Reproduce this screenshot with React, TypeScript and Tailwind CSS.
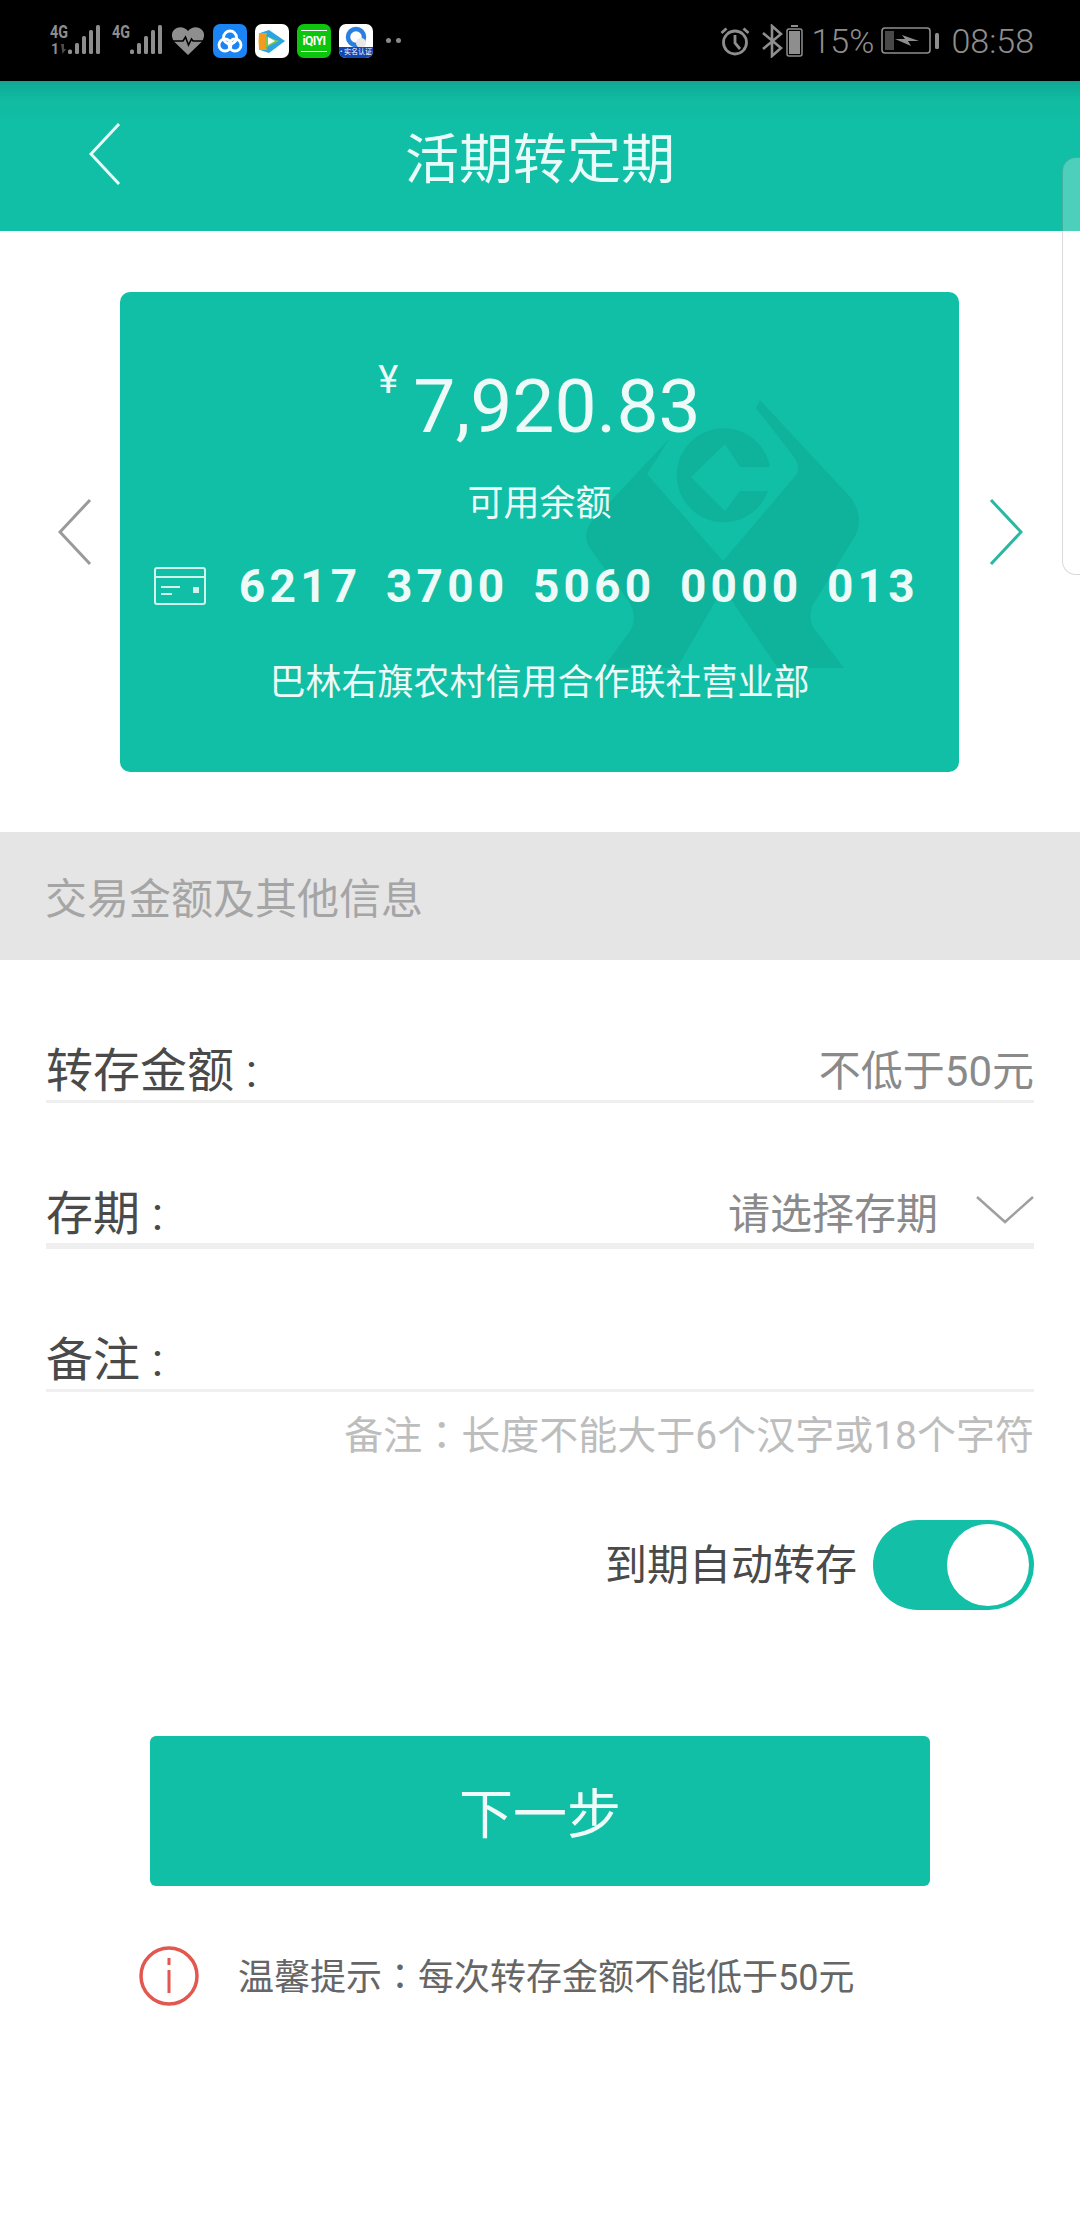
const gray = '#8e8e8e';

function Signal({ second }: { second?: boolean }) {
  return (
    <svg width="56" height="46" viewBox="0 -6 56 46" className="shrink-0">
      <text x="0" y="14" fontSize="18" fontWeight="700" fill={gray} fontFamily="Roboto, sans-serif" textLength="18" lengthAdjust="spacingAndGlyphs">4G</text>
      {second ? null : (
        <>
          <text x="1" y="30" fontSize="14" fontWeight="700" fill={gray} fontFamily="Roboto, sans-serif">1</text>
          <path d="M11 20h3v5h2l-3.5 5z" fill="#4b4b4b" />
        </>
      )}
      <rect x="18" y="25.5" width="4" height="4.5" rx="1.5" fill={gray} />
      <rect x="25" y="19" width="4" height="11" rx="1.5" fill={gray} />
      <rect x="32" y="12" width="4" height="18" rx="1.5" fill={gray} />
      <rect x="39" y="6" width="4" height="24" rx="1.5" fill={gray} />
      <rect x="46" y="1" width="4" height="29" rx="1.5" fill={gray} />
    </svg>
  );
}

function HeartRate() {
  return (
    <svg width="32" height="28" viewBox="0 0 32 28" className="shrink-0">
      <path d="M16 28 3 15.5C-1 11-1 5.5 2.500 2.500 6.500-.8 12-.5 16 4c4-4.500 9.500-4.800 13.500-1.500 3.500 3 3.500 8.500-.5 13z" fill={gray} />
      <path d="M1 14h10l2.500-4 3 8 3-6 1.500 2h10" fill="none" stroke="#000" strokeWidth="1.600" />
    </svg>
  );
}

function AppIcons() {
  return (
    <div className="flex gap-[8px] ml-[9px]">
      <svg width="34" height="34" viewBox="0 0 34 34">
        <rect width="34" height="34" rx="7" fill="#1a84f5" />
        <g fill="none" stroke="#fff" strokeWidth="2.800">
          <circle cx="17" cy="13.500" r="6.500" />
          <circle cx="12" cy="21" r="6" />
          <circle cx="22" cy="21" r="6" />
        </g>
      </svg>
      <svg width="34" height="34" viewBox="0 0 34 34">
        <rect width="34" height="34" rx="7" fill="#fff" />
        <path d="M5 9 14 6 30 17 14 29 5 26z" fill="#2aa5e0" />
        <path d="M4 9h8l-2 8 2 9-8 0q-1-9 0-17z" fill="#f39a1f" />
        <path d="M10 12 24 17 10 24z" fill="#7cc84a" />
        <path d="M13 13 20 17 13 21z" fill="#fff" />
      </svg>
      <div className="w-[34px] h-[34px] rounded-[7px] bg-[#0cc50c] flex items-center justify-center">
        <div className="w-[26px] h-[22px] border-y border-white flex items-center justify-center text-white text-[12px] leading-none font-bold tracking-[-0.5px]">iQIYI</div>
      </div>
      <div className="w-[34px] h-[34px] rounded-[7px] bg-white overflow-hidden flex flex-col items-center">
        <svg width="22" height="21" viewBox="0 0 22 21" className="mt-[2px]">
          <circle cx="11" cy="11" r="8" fill="none" stroke="#2a7fe0" strokeWidth="4.500" />
          <circle cx="16" cy="17" r="5" fill="#e8e8e8" />
        </svg>
        <div className="w-full flex-1 bg-[#1047b5] text-white text-[7px] leading-[10px] text-center">• 实名认证</div>
      </div>
      <div className="flex gap-[5px] items-center ml-[5px]">
        <div className="w-[5px] h-[5px] rounded-full bg-[#8a8a8a]" />
        <div className="w-[5px] h-[5px] rounded-full bg-[#8a8a8a]" />
      </div>
    </div>
  );
}

function StatusRight() {
  return (
    <div className="flex items-center text-[#8e8e8e] text-[34px] leading-none font-light">
      <svg width="30" height="30" viewBox="0 0 30 30" fill="none" stroke={gray} strokeWidth="2.800">
        <circle cx="15" cy="16.500" r="11.500" />
        <path d="M15 9v8l5 6" />
        <path d="M1.500 7 6.500 2.500M28.500 7 23.500 2.500" />
      </svg>
      <svg width="22" height="34" viewBox="0 0 22 34" fill="none" stroke={gray} strokeWidth="2.600" className="ml-[11px]">
        <path d="M2 9 20 24 11 32V2l9 8L2 25" />
      </svg>
      <svg width="17" height="32" viewBox="0 0 17 32" className="ml-[3px]">
        <rect x="5" y="0" width="7" height="2" fill={gray} />
        <rect x="1" y="4" width="15" height="27" rx="2" fill="none" stroke={gray} strokeWidth="1.500" />
        <rect x="3" y="6" width="11" height="23" fill={gray} />
      </svg>
      <span className="ml-[8px] w-[60px]">15%</span>
      <svg width="58" height="28" viewBox="0 0 58 28" className="ml-[10px]">
        <rect x="1" y="1" width="48" height="25" rx="3" fill="none" stroke={gray} strokeWidth="1.600" />
        <rect x="4" y="4" width="9" height="19" fill="#484848" />
        <path d="M14 12H24L21 8 38 14H27L30 19Z" fill={gray} />
        <rect x="54" y="6" width="4" height="16" rx="1.500" fill={gray} />
      </svg>
      <span className="ml-[12px]">08:58</span>
    </div>
  );
}

function Watermark() {
  return (
    <svg width="320" height="300" viewBox="0 0 320 300" className="absolute left-[440px] top-[89px]" fill="#0fb39c">
      <path d="M200 19 292 118Q306 140 292 160L254 222Q246 238 256 250L284 287H218L163 207 117 287H43L70 250Q78 238 70 222L32 170Q20 155 32 140L110 57 87 93 163 180 237 93Q240 85 234 76L196 27Z" />
      <path d="M210 86A47 47 0 1 0 208 110H180L165 130 131 96 165 63 180 86Z" />
    </svg>
  );
}

function Chevron({ dir, color }: { dir: 'left' | 'right'; color: string }) {
  return (
    <svg width="34" height="66" viewBox="0 0 34 66" fill="none" stroke={color} strokeWidth="3" className="shrink-0">
      <path d={dir === 'left' ? 'M32 1 2 33l30 32' : 'M2 1l30 32L2 65'} />
    </svg>
  );
}

function BankCard() {
  return (
    <div className="relative w-[839px] h-[480px] rounded-[10px] bg-[#10bfa5] text-[#eefaf7] overflow-hidden flex flex-col pt-[64px]">
      <Watermark />
      <div className="relative flex justify-center h-[100px]">
        <span className="text-[38px] leading-[38px] mt-[5px] mr-[15px]">¥</span>
        <span className="text-[75px] leading-[100px]">7,920.83</span>
      </div>
      <div className="relative h-[50px] mt-[23px] text-center text-[36px] leading-[50px]">可用余额</div>
      <div className="relative h-[50px] mt-[32px] pl-[34px] flex items-center">
        <svg width="52" height="38" viewBox="0 0 52 38" fill="none" stroke="#d2f3ec" strokeWidth="2">
          <rect x="1" y="1" width="50" height="36" rx="2" />
          <path d="M1 10h50M7 20h19M7 27h11" />
          <rect x="39" y="20" width="6" height="6" fill="#d2f3ec" stroke="none" />
        </svg>
        <span className="ml-[33px] font-bold text-[46px] leading-[50px] tracking-[4.200px] [word-spacing:9px] whitespace-pre tabular-nums">6217 3700 5060 0000 013</span>
      </div>
      <div className="relative h-[50px] mt-[47px] text-center text-[36px] leading-[50px]">巴林右旗农村信用合作联社营业部</div>
    </div>
  );
}

function FormRow({ label, line, height, children }: { label: string; line: string; height: string; children: React.ReactNode }) {
  return (
    <div className={`flex items-end justify-between border-b-[#efefef] ${line} ${height}`}>
      <span className="text-[47px] leading-[58px] text-[#4a4a4a]">{label}</span>
      {children}
    </div>
  );
}

export default function App() {
  return (
    <div lang="zh-CN" className="relative w-[1080px] h-[2240px] overflow-hidden bg-white font-['Roboto','Noto_Sans_CJK_SC',sans-serif]">
      {/* Status bar */}
      <div className="h-[81px] bg-black flex items-center justify-between pl-[50px] pr-[46px]">
        <div className="flex items-center">
          <Signal />
          <div className="w-[6px]" />
          <Signal second />
          <div className="w-[4px]" />
          <HeartRate />
          <AppIcons />
        </div>
        <StatusRight />
      </div>

      {/* Header */}
      <div className="h-[150px] bg-[linear-gradient(#0fa794,#10bba2_18px,#10bfa5_40px)] flex items-center relative">
        <svg width="32" height="62" viewBox="0 0 32 62" fill="none" stroke="#e6faf6" strokeWidth="3" className="absolute left-[89px] top-[42px]">
          <path d="M30 1 2 31l28 30" />
        </svg>
        <div className="w-full pt-[10px] text-center text-[54px] leading-none text-[#e9fbf8]">活期转定期</div>
      </div>

      {/* Card carousel */}
      <div className="h-[601px] flex items-center pl-[58px]">
        <Chevron dir="left" color="#9a9a9a" />
        <div className="w-[28px]" />
        <BankCard />
        <div className="w-[30px]" />
        <Chevron dir="right" color="#2ab8a3" />
      </div>

      {/* Section title */}
      <div className="h-[128px] bg-[#e5e5e5] flex items-center pl-[45px] pt-[6px] text-[42px] text-[#a5a5a5]">交易金额及其他信息</div>

      {/* Form */}
      <div className="px-[46px]">
        <FormRow label="转存金额 :" line="border-b-[3px]" height="h-[143px]">
          <span className="text-[42px] leading-[56px] text-[#8a8a8a]">不低于50元</span>
        </FormRow>
        <FormRow label="存期 :" line="border-b-[6px]" height="h-[146px]">
          <div className="flex items-center h-[56px]">
            <span className="text-[42px] leading-[56px] text-[#8a8a8a] mr-[-1px]">请选择存期</span>
            <svg width="58" height="30" viewBox="0 0 58 30" fill="none" stroke="#9f9f9f" strokeWidth="2.500" className="ml-[39px] mb-[10px]">
              <path d="M1 2l28 25L57 2" />
            </svg>
          </div>
        </FormRow>
        <FormRow label="备注 :" line="border-b-[3px]" height="h-[143px]">
          <span />
        </FormRow>
        <div className="mt-[15px] h-[50px] text-right text-[39px] leading-[50px] text-[#bdbdbd]">
          备注<span lang="zh-TW" className="font-['Noto_Sans_CJK_TC',sans-serif]">：</span>长度不能大于6个汉字或18个字符
        </div>
        <div className="mt-[63px] flex items-center justify-end gap-[16px]">
          <span className="text-[42px] text-[#4a4a4a]">到期自动转存</span>
          <div className="w-[161px] h-[90px] rounded-full bg-[#13bfa6] flex items-center justify-end pr-[5px]">
            <div className="w-[82px] h-[82px] rounded-full bg-white" />
          </div>
        </div>
        <div className="mt-[126px] mx-[104px] h-[150px] rounded-[6px] bg-[#10bfa5] flex items-center justify-center pt-[8px] text-[54px] text-[#f0fbf9]">下一步</div>
        <div className="mt-[60px] pl-[93px] flex items-center gap-[39px]">
          <svg width="60" height="60" viewBox="0 0 60 60" fill="none" stroke="#e2574f" strokeWidth="3.500">
            <circle cx="30" cy="30" r="28" />
            <path d="M30 12v7M30 24v23" strokeWidth="3" />
          </svg>
          <span className="text-[36px] leading-[50px] text-[#666666]">
            温馨提示<span lang="zh-TW" className="font-['Noto_Sans_CJK_TC',sans-serif]">：</span>每次转存金额不能低于50元
          </span>
        </div>
      </div>

      {/* Floating edge tab */}
      <div className="absolute left-[1062px] top-[157px] w-[30px] h-[418px] rounded-l-[14px] border border-black/15 bg-white/25" />
    </div>
  );
}
